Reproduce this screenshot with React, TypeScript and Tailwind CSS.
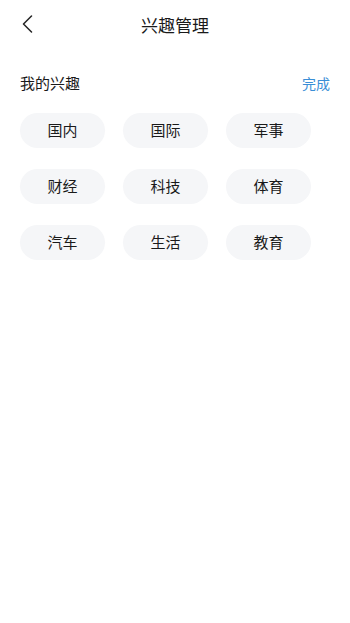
import React from "react";

const tags = ["国内", "国际", "军事", "财经", "科技", "体育", "汽车", "生活", "教育"];

export default function App() {
  return (
    <div
      className="w-[350px] h-[623px] bg-white text-[#1a1a1a]"
      style={{ fontFamily: '"Noto Sans CJK SC", "Noto Sans", sans-serif' }}
    >
      <div className="relative h-[48px] flex items-center justify-center">
        <svg
          className="absolute left-[22px] top-[15px]"
          width="11"
          height="18"
          viewBox="0 0 11 18"
          fill="none"
        >
          <path d="M9.5 1 L1.5 9 L9.5 17" stroke="#222" strokeWidth="1.5" strokeLinecap="round" strokeLinejoin="round" />
        </svg>
        <span className="text-[17px] leading-none">兴趣管理</span>
      </div>
      <div className="flex items-center justify-between px-5 mt-[24px] h-[22px]">
        <span className="text-[15px]">我的兴趣</span>
        <span className="text-[14px] text-[#3a8ed6]">完成</span>
      </div>
      <div className="grid grid-cols-[85px_85px_85px] gap-x-[18px] gap-y-[21px] px-5 mt-[19px]">
        {tags.map((t) => (
          <div
            key={t}
            className="h-[35px] rounded-full bg-[#f5f6f8] flex items-center justify-center text-[15px]"
          >
            {t}
          </div>
        ))}
      </div>
    </div>
  );
}
